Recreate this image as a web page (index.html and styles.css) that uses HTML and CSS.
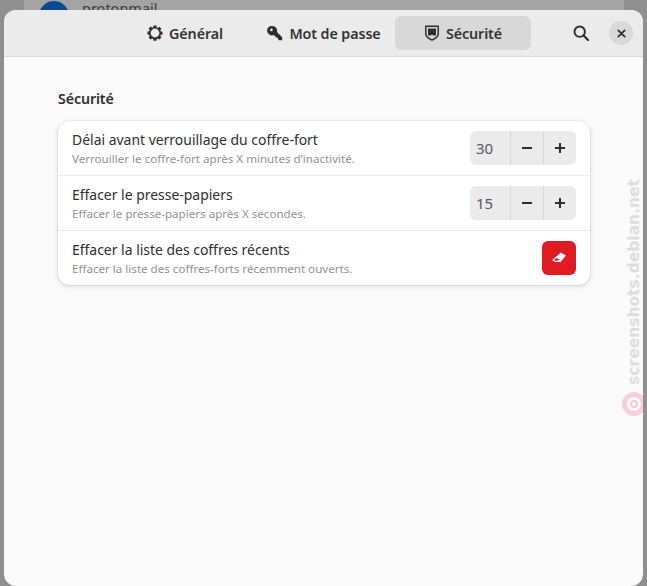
FILE: index.html
```html
<!DOCTYPE html>
<html lang="fr">
<head>
<meta charset="utf-8">
<title>Sécurité</title>
<link rel="stylesheet" href="styles.css">
</head>
<body>
<div class="backdrop">
  <div class="under-window">
    <span class="avatar"></span>
    <span class="under-name">protonmail</span>
  </div>
</div>
<main class="window">
  <header class="headerbar">
    <nav class="tabs">
      <div class="tab tab-general">
        <svg class="icon" viewBox="0 0 16 16"><path fill="#2e2e2e" fill-rule="evenodd" d="M6.600.5h2.800l.4 2 .9.4 1.700-1.100 2 2-1.100 1.700.4.9 1.800.4v2.800l-1.800.4-.4.9 1.100 1.700-2 2-1.700-1.100-.9.4-.4 1.900H6.600l-.4-1.900-.9-.4-1.700 1.100-2-2 1.100-1.700-.4-.9L.5 9.400V6.600l1.800-.4.4-.9-1.100-1.700 2-2 1.700 1.100.9-.4zM8 3.600a4.400 4.400 0 1 0 0 8.800 4.400 4.400 0 0 0 0-8.800z"/></svg>
        <span>Général</span>
      </div>
      <div class="tab tab-pass">
        <svg class="icon" viewBox="0 0 16 16"><path fill="#2e2e2e" fill-rule="evenodd" d="M5.500 1a4.700 4.700 0 0 1 4.500 6l5.200 5.200v3H12l-1-1v-1.400H9.600L6.800 9.900A4.700 4.700 0 1 1 5.500 1zM4.400 3.600a1.300 1.300 0 1 0 0 2.600 1.300 1.300 0 0 0 0-2.600z"/></svg>
        <span>Mot de passe</span>
      </div>
      <div class="tab tab-active">
        <svg class="icon" viewBox="0 0 16 16"><path fill="none" stroke="#2e2e2e" stroke-width="1.500" d="M1.800 1.300h12.400v8.200c0 2.300-3.300 4.200-6.200 5.600-2.900-1.400-6.200-3.300-6.200-5.600z"/><path fill="#2e2e2e" d="M4 3.500h8v6c0 .5-.3.9-.7 1.300-1-.5-2.200-.8-3.300-.8s-2.300.3-3.300.8c-.4-.4-.7-.8-.7-1.300z"/></svg>
        <span>Sécurité</span>
      </div>
    </nav>
    <button class="search" aria-label="Rechercher">
      <svg class="icon" viewBox="0 0 16 16"><circle cx="6.700" cy="6.700" r="5.200" fill="none" stroke="#2e2e2e" stroke-width="1.900"/><path d="M10.500 10.500l4.500 4.500" stroke="#2e2e2e" stroke-width="2.200" stroke-linecap="round"/></svg>
    </button>
    <button class="close" aria-label="Fermer">
      <svg class="close-icon" viewBox="0 0 10 10"><path d="M1.500 1.500l7 7M8.500 1.500l-7 7" stroke="#2e2e2e" stroke-width="2" stroke-linecap="round"/></svg>
    </button>
  </header>
  <section class="content">
    <h2 class="section-title">Sécurité</h2>
    <div class="card">
      <div class="row">
        <div class="row-text">
          <div class="row-title">Délai avant verrouillage du coffre-fort</div>
          <div class="row-sub">Verrouiller le coffre-fort après X minutes d’inactivité.</div>
        </div>
        <div class="spin">
          <span class="spin-value">30</span>
          <span class="spin-btn"><span class="minus"></span></span>
          <span class="spin-btn"><span class="plus"></span></span>
        </div>
      </div>
      <div class="row">
        <div class="row-text">
          <div class="row-title">Effacer le presse-papiers</div>
          <div class="row-sub">Effacer le presse-papiers après X secondes.</div>
        </div>
        <div class="spin">
          <span class="spin-value">15</span>
          <span class="spin-btn"><span class="minus"></span></span>
          <span class="spin-btn"><span class="plus"></span></span>
        </div>
      </div>
      <div class="row">
        <div class="row-text">
          <div class="row-title">Effacer la liste des coffres récents</div>
          <div class="row-sub">Effacer la liste des coffres-forts récemment ouverts.</div>
        </div>
        <button class="danger" aria-label="Effacer">
          <svg class="eraser" viewBox="0 0 16 16"><path fill="#fff" d="M10 2.500l5 3-5.500 6.500H4.500L1 10.200z"/><path fill="#e01b24" d="M2.900 10.100l2.600-2.200 3 1.900-1.600 1H5z"/></svg>
        </button>
      </div>
    </div>
  </section>
  <div class="watermark">
    <span class="wm-text">screenshots.debian.net</span>
    <span class="wm-logo"><span class="wm-dot"></span></span>
  </div>
</main>
</body>
</html>
```
FILE: styles.css
```css
* { box-sizing: border-box; }
html, body { margin: 0; height: 100%; }
body {
  width: 647px;
  height: 586px;
  overflow: hidden;
  position: relative;
  background: #8f8f8f;
  font-family: "Noto Sans", "Open Sans", sans-serif;
  color: #2e2e2e;
}
.backdrop { position: absolute; inset: 0; padding: 0 23px 0 24px; }
.under-window {
  height: 100%;
  background: #a3a3a3;
  display: flex;
  align-items: flex-start;
  padding-left: 15px;
  gap: 13px;
  overflow: hidden;
}
.avatar { width: 30px; height: 30px; border-radius: 50%; background: #0d4a94; margin-top: 1px; flex: none; }
.under-name { font-size: 14.500px; line-height: 16px; color: #3a3a3a; }
.window {
  position: absolute;
  left: 4px;
  top: 10px;
  width: 639px;
  height: 576px;
  background: #fafafa;
  border-radius: 12px;
  overflow: hidden;
}
.headerbar {
  height: 47px;
  background: #ebebeb;
  border-bottom: 1px solid #d9d9d9;
  display: flex;
  align-items: center;
  padding: 0 10px 0 119px;
}
.tabs { display: flex; width: 408px; margin-right: 33px; }
.tab {
  width: 136px;
  height: 34px;
  border-radius: 6px;
  display: flex;
  align-items: center;
  justify-content: center;
  gap: 6px;
  font-size: 14.300px;
  font-weight: 600;
  letter-spacing: -0.1px;
  color: #333;
}
.tab-general { padding-right: 12px; }
.tab-pass { padding-right: 6px; }
.tab-active { background: #d8d8d8; }
.icon { width: 16px; height: 16px; display: block; flex: none; }
.search {
  width: 34px; height: 34px; padding: 0; border: 0; background: none;
  display: flex; align-items: center; justify-content: center;
  margin-right: 12px;
}
.close {
  width: 24px; height: 24px; padding: 0; border: 0; border-radius: 50%;
  background: #d9d9d9;
  display: flex; align-items: center; justify-content: center;
}
.close-icon { width: 9px; height: 9px; display: block; }
.content { padding: 32px 53px 0 54px; }
.section-title {
  margin: 0 0 13px;
  font-size: 14.200px;
  line-height: 19px;
  font-weight: 600;
  color: #2e2e2e;
  letter-spacing: -0.1px;
}
.card {
  background: #fff;
  border-radius: 12px;
  box-shadow: 0 0 0 1px rgba(0,0,0,.03), 0 1px 3px 1px rgba(0,0,0,.07), 0 2px 6px 2px rgba(0,0,0,.03);
}
.row {
  height: 55px;
  padding: 0 14px 1px;
  display: flex;
  align-items: center;
  justify-content: space-between;
  border-bottom: 1px solid #ebebeb;
}
.row:last-child { height: 54px; border-bottom: 0; }
.row-title { font-size: 13.950px; line-height: 19px; color: #2e2e2e; }
.row-sub { font-size: 11.600px; line-height: 15px; color: #919191; margin-top: 2px; }
.spin {
  width: 106px;
  height: 34px;
  background: #ebebeb;
  border-radius: 6px;
  display: flex;
  overflow: hidden;
}
.spin-value {
  width: 40px;
  font-size: 15px;
  line-height: 34px;
  padding-left: 6px;
  color: #555;
}
.spin-btn {
  width: 33px;
  border-left: 1px solid #d9d9d9;
  display: flex;
  align-items: center;
  justify-content: center;
}
.minus, .plus { width: 10px; height: 2px; background: #2e2e2e; position: relative; display: block; }
.plus::after { content: ""; position: absolute; left: 4px; top: -4px; width: 2px; height: 10px; background: #2e2e2e; }
.danger {
  width: 34px; height: 34px; padding: 0; border: 0; border-radius: 6px;
  background: #e01b24;
  display: flex; align-items: center; justify-content: center;
}
.eraser { width: 16px; height: 16px; display: block; }
.watermark {
  position: absolute;
  right: -3px;
  top: 169px;
  width: 24px;
  display: flex;
  flex-direction: column;
  align-items: center;
  gap: 7px;
}
.wm-text {
  writing-mode: vertical-rl;
  transform: rotate(180deg);
  font-family: "DejaVu Sans", sans-serif;
  font-weight: 700;
  font-size: 15.500px;
  line-height: 16px;
  color: #dedede;
}
.wm-logo {
  width: 24px; height: 24px; border-radius: 50%;
  border: 5px solid #f5d0da;
  background: #fafafa;
  display: flex;
  align-items: center;
  justify-content: center;
}
.wm-dot { width: 8px; height: 8px; border-radius: 50%; border: 2px solid #f5d0da; display: block; }
```
